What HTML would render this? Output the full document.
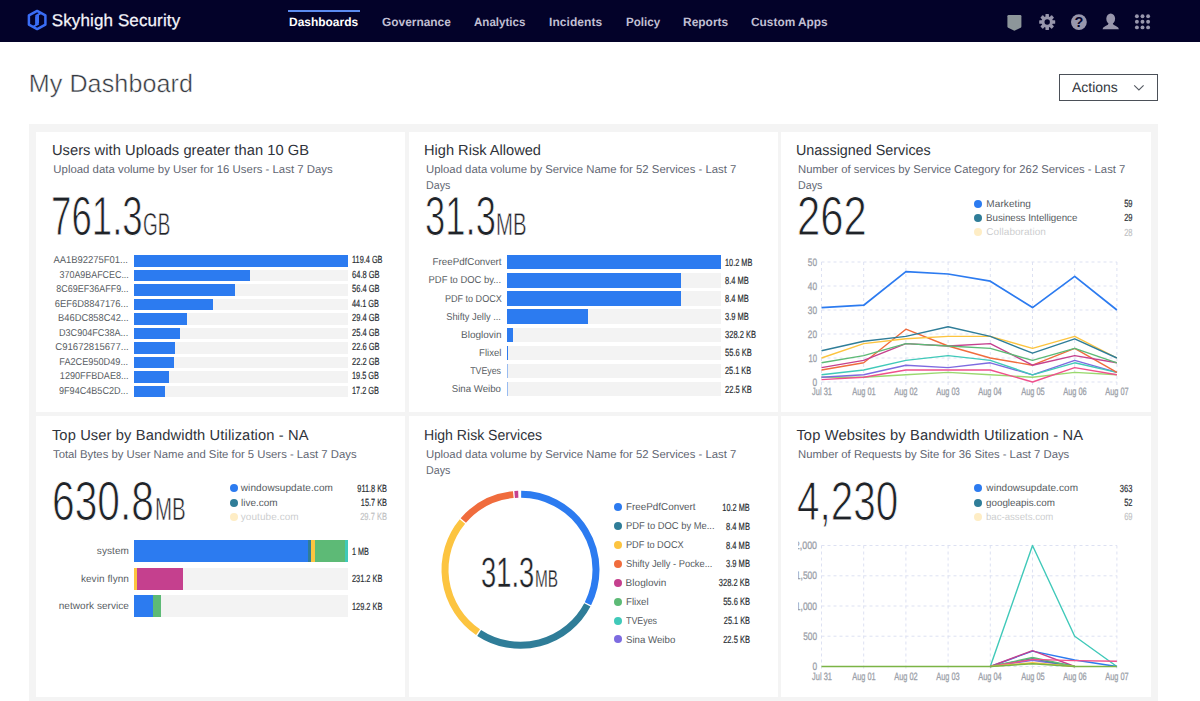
<!DOCTYPE html>
<html lang="en"><head><meta charset="utf-8"><title>My Dashboard</title>
<style>
*{box-sizing:border-box}
html,body{margin:0;padding:0}
body{width:1200px;height:701px;overflow:hidden;background:#fff;font-family:"Liberation Sans", sans-serif;position:relative;color:#3a3f47;text-rendering:geometricPrecision}
.abs,.cd{position:absolute;white-space:nowrap}
.nav{position:absolute;left:0;top:0;width:1200px;height:41.7px;background:#030229}
.panel{position:absolute;left:28.5px;top:124px;width:1129px;height:577px;background:#f4f4f4}
.card{position:absolute;background:#fff;width:369.2px;height:280.8px}
.dot{position:absolute;width:8px;height:8px;border-radius:50%}
.bar{position:absolute}
svg{position:absolute;left:0;top:0;overflow:visible}
svg text{font-family:"Liberation Sans", sans-serif;text-rendering:geometricPrecision}
</style></head><body>
<div class="nav">
<svg width="60" height="42" viewBox="0 0 60 42"><path d="M37.15 10.9 L45.4 15.45 V24.55 L37.15 29.1 L28.9 24.55 V15.45 Z" fill="none" stroke="#3a6df6" stroke-width="2.5" stroke-linejoin="round"/><path d="M35.1 16.5 L39 14.1 V23.3 L35.1 25.5 Z" fill="#3a6df6"/><path d="M35.6 16.2 L41.6 12.7 M38.6 23.6 L32.8 27" stroke="#3a6df6" stroke-width="2" fill="none"/></svg>
<span class="abs" style="left:51.72px;top:12px;font-size:17px;line-height:17px;letter-spacing:0.120px;color:#f4f4fa;-webkit-text-stroke:0.25px #f4f4fa;">Skyhigh Security</span>
<div class="abs" style="left:288.2px;top:9.8px;width:71.6px;height:2px;background:#5b8af0"></div>
<span class="abs" style="left:289.32px;top:16px;font-size:12px;line-height:12px;color:#fff;font-weight:bold;transform:scaleX(0.9966);transform-origin:0 0;">Dashboards</span>
<span class="abs" style="left:381.72px;top:16px;font-size:12px;line-height:12px;color:#c0bfd2;font-weight:bold;transform:scaleX(0.9921);transform-origin:0 0;">Governance</span>
<span class="abs" style="left:474.34px;top:16px;font-size:12px;line-height:12px;color:#c0bfd2;font-weight:bold;transform:scaleX(0.9632);transform-origin:0 0;">Analytics</span>
<span class="abs" style="left:549.02px;top:16px;font-size:12px;line-height:12px;letter-spacing:0.068px;color:#c0bfd2;font-weight:bold;">Incidents</span>
<span class="abs" style="left:625.54px;top:16px;font-size:12px;line-height:12px;color:#c0bfd2;font-weight:bold;transform:scaleX(0.9674);transform-origin:0 0;">Policy</span>
<span class="abs" style="left:682.52px;top:16px;font-size:12px;line-height:12px;color:#c0bfd2;font-weight:bold;transform:scaleX(0.9973);transform-origin:0 0;">Reports</span>
<span class="abs" style="left:750.53px;top:16px;font-size:12px;line-height:12px;color:#c0bfd2;font-weight:bold;transform:scaleX(0.9891);transform-origin:0 0;">Custom Apps</span>
<svg width="1200" height="42" viewBox="0 0 1200 42">
<path d="M1007.4 16.3 q0 -1.2 1.2 -1.2 h11.6 q1.2 0 1.2 1.2 V26.4 q0 .9 -.8 1.3 L1014.4 30.8 L1008.2 27.7 q-.8 -.4 -.8 -1.3 Z" fill="#8d969a"/>
<g fill="#9896ac"><circle cx="1047.2" cy="22" r="5.7"/>
<rect x="1045.45" y="14" width="3.5" height="4" rx="0.6" transform="rotate(0 1047.2 22)"/>
<rect x="1045.45" y="14" width="3.5" height="4" rx="0.6" transform="rotate(45 1047.2 22)"/>
<rect x="1045.45" y="14" width="3.5" height="4" rx="0.6" transform="rotate(90 1047.2 22)"/>
<rect x="1045.45" y="14" width="3.5" height="4" rx="0.6" transform="rotate(135 1047.2 22)"/>
<rect x="1045.45" y="14" width="3.5" height="4" rx="0.6" transform="rotate(180 1047.2 22)"/>
<rect x="1045.45" y="14" width="3.5" height="4" rx="0.6" transform="rotate(225 1047.2 22)"/>
<rect x="1045.45" y="14" width="3.5" height="4" rx="0.6" transform="rotate(270 1047.2 22)"/>
<rect x="1045.45" y="14" width="3.5" height="4" rx="0.6" transform="rotate(315 1047.2 22)"/>
</g><circle cx="1047.2" cy="22" r="2.7" fill="#030229"/>
<circle cx="1078.9" cy="22.1" r="7.9" fill="#9896ac"/><text x="1078.9" y="27.4" text-anchor="middle" font-size="14.5" font-weight="bold" fill="#030229">?</text>
<g fill="#9896ac"><ellipse cx="1110.7" cy="18.7" rx="4.4" ry="5.3"/><path d="M1102.5 29.3 q0 -2 3 -3.2 q3.2 -1.2 3.2 -3.1 h4 q0 1.9 3.2 3.1 q3 1.2 3 3.2 Z"/></g>
<g fill="#9896ac">
<circle cx="1136.9" cy="16.2" r="1.95"/>
<circle cx="1142.5" cy="16.2" r="1.95"/>
<circle cx="1148.1000000000001" cy="16.2" r="1.95"/>
<circle cx="1136.9" cy="21.799999999999997" r="1.95"/>
<circle cx="1142.5" cy="21.799999999999997" r="1.95"/>
<circle cx="1148.1000000000001" cy="21.799999999999997" r="1.95"/>
<circle cx="1136.9" cy="27.4" r="1.95"/>
<circle cx="1142.5" cy="27.4" r="1.95"/>
<circle cx="1148.1000000000001" cy="27.4" r="1.95"/>
</g></svg>
</div>
<span class="abs" style="left:28.70px;top:72px;font-size:25.1px;line-height:25.1px;letter-spacing:0.098px;color:#363a42;-webkit-text-stroke:0.45px #fff;">My Dashboard</span>
<div class="abs" style="left:1059px;top:73.5px;width:98.5px;height:27.5px;border:1.5px solid #4b5058;background:#fff"></div>
<span class="abs" style="left:1071.54px;top:80px;font-size:14px;line-height:14px;color:#33373e;transform:scaleX(0.9962);transform-origin:0 0;">Actions</span>
<svg width="1200" height="120"><path d="M1134.2 85.3 L1138.9 89.9 L1143.6 85.3" fill="none" stroke="#555a62" stroke-width="1.1"/></svg>
<div class="panel"></div>
<div class="card" style="left:35.7px;top:131.7px"></div>
<div class="card" style="left:408.6px;top:131.7px"></div>
<div class="card" style="left:781.4px;top:131.7px"></div>
<div class="card" style="left:35.7px;top:416.4px"></div>
<div class="card" style="left:408.6px;top:416.4px"></div>
<div class="card" style="left:781.4px;top:416.4px"></div>
<span class="abs" style="left:51.91px;top:144px;font-size:14.7px;line-height:14.7px;letter-spacing:0.046px;color:#2f333a;">Users with Uploads greater than 10 GB</span>
<span class="abs" style="left:53.34px;top:165px;font-size:11.4px;line-height:11.4px;letter-spacing:0.003px;color:#5f6672;">Upload data volume by User for 16 Users - Last 7 Days</span>
<span class="cd" style="left:51.13px;top:189.00px;font-size:55.1px;line-height:55.1px;transform:scaleX(0.6654);transform-origin:0 0;color:#1f2328;font-weight:normal;-webkit-text-stroke:1px #fff;">761.3</span>
<span class="cd" style="left:143.46px;top:209.00px;font-size:31.7px;line-height:31.7px;transform:scaleX(0.5969);transform-origin:0 0;color:#1f2328;font-weight:normal;-webkit-text-stroke:0.6px #fff;">GB</span>
<div class="bar" style="left:134px;top:255.0px;width:213.8px;height:11.6px;background:#f3f3f3"></div>
<div class="bar" style="left:134px;top:255.0px;width:213.8px;height:11.6px;background:#2c7bf0"></div>
<span class="abs" style="right:1071.62px;top:256px;font-size:10px;line-height:10px;color:#585d63;transform:scaleX(0.9445);transform-origin:100% 0;">AA1B92275F01...</span>
<span class="cd" style="left:351.80px;top:256.00px;font-size:10.4px;line-height:10.4px;transform:scaleX(0.7071);transform-origin:0 0;color:#2b2f34;-webkit-text-stroke:0.2px #2b2f34;">119.4 GB</span>
<div class="bar" style="left:134px;top:269.5px;width:213.8px;height:11.6px;background:#f3f3f3"></div>
<div class="bar" style="left:134px;top:269.5px;width:116.0px;height:11.6px;background:#2c7bf0"></div>
<span class="abs" style="right:1071.64px;top:271px;font-size:10px;line-height:10px;color:#585d63;transform:scaleX(0.8897);transform-origin:100% 0;">370A9BAFCEC...</span>
<span class="cd" style="left:351.80px;top:271.00px;font-size:10.4px;line-height:10.4px;transform:scaleX(0.7250);transform-origin:0 0;color:#2b2f34;-webkit-text-stroke:0.2px #2b2f34;">64.8 GB</span>
<div class="bar" style="left:134px;top:284.0px;width:213.8px;height:11.6px;background:#f3f3f3"></div>
<div class="bar" style="left:134px;top:284.0px;width:101.0px;height:11.6px;background:#2c7bf0"></div>
<span class="abs" style="right:1071.64px;top:285px;font-size:10px;line-height:10px;color:#585d63;transform:scaleX(0.8963);transform-origin:100% 0;">8C69EF36AFF9...</span>
<span class="cd" style="left:351.80px;top:285.00px;font-size:10.4px;line-height:10.4px;transform:scaleX(0.7250);transform-origin:0 0;color:#2b2f34;-webkit-text-stroke:0.2px #2b2f34;">56.4 GB</span>
<div class="bar" style="left:134px;top:298.5px;width:213.8px;height:11.6px;background:#f3f3f3"></div>
<div class="bar" style="left:134px;top:298.5px;width:79.0px;height:11.6px;background:#2c7bf0"></div>
<span class="abs" style="right:1071.62px;top:300px;font-size:10px;line-height:10px;color:#585d63;transform:scaleX(0.9397);transform-origin:100% 0;">6EF6D8847176...</span>
<span class="cd" style="left:351.80px;top:300.00px;font-size:10.4px;line-height:10.4px;transform:scaleX(0.7076);transform-origin:0 0;color:#2b2f34;-webkit-text-stroke:0.2px #2b2f34;">44.1 GB</span>
<div class="bar" style="left:134px;top:313.0px;width:213.8px;height:11.6px;background:#f3f3f3"></div>
<div class="bar" style="left:134px;top:313.0px;width:52.6px;height:11.6px;background:#2c7bf0"></div>
<span class="abs" style="right:1071.63px;top:314px;font-size:10px;line-height:10px;color:#585d63;transform:scaleX(0.9333);transform-origin:100% 0;">B46DC858C42...</span>
<span class="cd" style="left:351.80px;top:314.00px;font-size:10.4px;line-height:10.4px;transform:scaleX(0.7250);transform-origin:0 0;color:#2b2f34;-webkit-text-stroke:0.2px #2b2f34;">29.4 GB</span>
<div class="bar" style="left:134px;top:327.5px;width:213.8px;height:11.6px;background:#f3f3f3"></div>
<div class="bar" style="left:134px;top:327.5px;width:45.5px;height:11.6px;background:#2c7bf0"></div>
<span class="abs" style="right:1071.64px;top:329px;font-size:10px;line-height:10px;color:#585d63;transform:scaleX(0.9080);transform-origin:100% 0;">D3C904FC38A...</span>
<span class="cd" style="left:351.80px;top:329.00px;font-size:10.4px;line-height:10.4px;transform:scaleX(0.7250);transform-origin:0 0;color:#2b2f34;-webkit-text-stroke:0.2px #2b2f34;">25.4 GB</span>
<div class="bar" style="left:134px;top:342.0px;width:213.8px;height:11.6px;background:#f3f3f3"></div>
<div class="bar" style="left:134px;top:342.0px;width:40.5px;height:11.6px;background:#2c7bf0"></div>
<span class="abs" style="right:1071.62px;top:343px;font-size:10px;line-height:10px;color:#585d63;transform:scaleX(0.9575);transform-origin:100% 0;">C91672815677...</span>
<span class="cd" style="left:351.80px;top:343.00px;font-size:10.4px;line-height:10.4px;transform:scaleX(0.7250);transform-origin:0 0;color:#2b2f34;-webkit-text-stroke:0.2px #2b2f34;">22.6 GB</span>
<div class="bar" style="left:134px;top:356.5px;width:213.8px;height:11.6px;background:#f3f3f3"></div>
<div class="bar" style="left:134px;top:356.5px;width:39.8px;height:11.6px;background:#2c7bf0"></div>
<span class="abs" style="right:1071.63px;top:358px;font-size:10px;line-height:10px;color:#585d63;transform:scaleX(0.9161);transform-origin:100% 0;">FA2CE950D49...</span>
<span class="cd" style="left:351.80px;top:358.00px;font-size:10.4px;line-height:10.4px;transform:scaleX(0.7250);transform-origin:0 0;color:#2b2f34;-webkit-text-stroke:0.2px #2b2f34;">22.2 GB</span>
<div class="bar" style="left:134px;top:371.0px;width:213.8px;height:11.6px;background:#f3f3f3"></div>
<div class="bar" style="left:134px;top:371.0px;width:34.9px;height:11.6px;background:#2c7bf0"></div>
<span class="abs" style="right:1071.64px;top:372px;font-size:10px;line-height:10px;color:#585d63;transform:scaleX(0.9094);transform-origin:100% 0;">1290FFBDAE8...</span>
<span class="cd" style="left:351.80px;top:372.00px;font-size:10.4px;line-height:10.4px;transform:scaleX(0.7076);transform-origin:0 0;color:#2b2f34;-webkit-text-stroke:0.2px #2b2f34;">19.5 GB</span>
<div class="bar" style="left:134px;top:385.5px;width:213.8px;height:11.6px;background:#f3f3f3"></div>
<div class="bar" style="left:134px;top:385.5px;width:30.8px;height:11.6px;background:#2c7bf0"></div>
<span class="abs" style="right:1071.64px;top:387px;font-size:10px;line-height:10px;color:#585d63;transform:scaleX(0.9080);transform-origin:100% 0;">9F94C4B5C2D...</span>
<span class="cd" style="left:351.80px;top:387.00px;font-size:10.4px;line-height:10.4px;transform:scaleX(0.7076);transform-origin:0 0;color:#2b2f34;-webkit-text-stroke:0.2px #2b2f34;">17.2 GB</span>
<span class="abs" style="left:424.41px;top:144px;font-size:14.7px;line-height:14.7px;color:#2f333a;transform:scaleX(0.9951);transform-origin:0 0;">High Risk Allowed</span>
<span class="abs" style="left:426.35px;top:165px;font-size:11.4px;line-height:11.4px;color:#5f6672;transform:scaleX(0.9963);transform-origin:0 0;">Upload data volume by Service Name for 52 Services - Last 7</span>
<span class="abs" style="left:426.37px;top:181px;font-size:11.4px;line-height:11.4px;color:#5f6672;transform:scaleX(0.9372);transform-origin:0 0;">Days</span>
<span class="cd" style="left:424.94px;top:189.00px;font-size:55.1px;line-height:55.1px;transform:scaleX(0.6614);transform-origin:0 0;color:#1f2328;font-weight:normal;-webkit-text-stroke:1px #fff;">31.3</span>
<span class="cd" style="left:496.11px;top:209.00px;font-size:31.7px;line-height:31.7px;transform:scaleX(0.6402);transform-origin:0 0;color:#1f2328;font-weight:normal;-webkit-text-stroke:0.6px #fff;">MB</span>
<div class="bar" style="left:506.7px;top:255.0px;width:214.2px;height:14.4px;background:#f3f3f3"></div>
<div class="bar" style="left:506.7px;top:255.0px;width:214.20px;height:14.4px;background:#2c7bf0;"></div>
<span class="abs" style="right:698.61px;top:258px;font-size:10px;line-height:10px;color:#585d63;transform:scaleX(0.9780);transform-origin:100% 0;">FreePdfConvert</span>
<span class="cd" style="left:724.70px;top:259.00px;font-size:10.4px;line-height:10.4px;transform:scaleX(0.7078);transform-origin:0 0;color:#2b2f34;-webkit-text-stroke:0.2px #2b2f34;">10.2 MB</span>
<div class="bar" style="left:506.7px;top:273.15px;width:214.2px;height:14.4px;background:#f3f3f3"></div>
<div class="bar" style="left:506.7px;top:273.15px;width:174.79px;height:14.4px;background:#2c7bf0;"></div>
<span class="abs" style="right:698.62px;top:276px;font-size:10px;line-height:10px;color:#585d63;transform:scaleX(0.9405);transform-origin:100% 0;">PDF to DOC by...</span>
<span class="cd" style="left:724.70px;top:277.00px;font-size:10.4px;line-height:10.4px;transform:scaleX(0.7250);transform-origin:0 0;color:#2b2f34;-webkit-text-stroke:0.2px #2b2f34;">8.4 MB</span>
<div class="bar" style="left:506.7px;top:291.3px;width:214.2px;height:14.4px;background:#f3f3f3"></div>
<div class="bar" style="left:506.7px;top:291.3px;width:174.79px;height:14.4px;background:#2c7bf0;"></div>
<span class="abs" style="right:698.64px;top:295px;font-size:10px;line-height:10px;color:#585d63;transform:scaleX(0.9061);transform-origin:100% 0;">PDF to DOCX</span>
<span class="cd" style="left:724.70px;top:295.00px;font-size:10.4px;line-height:10.4px;transform:scaleX(0.7250);transform-origin:0 0;color:#2b2f34;-webkit-text-stroke:0.2px #2b2f34;">8.4 MB</span>
<div class="bar" style="left:506.7px;top:309.45px;width:214.2px;height:14.4px;background:#f3f3f3"></div>
<div class="bar" style="left:506.7px;top:309.45px;width:81.61px;height:14.4px;background:#2c7bf0;"></div>
<span class="abs" style="right:698.63px;top:313px;font-size:10px;line-height:10px;color:#585d63;transform:scaleX(0.9279);transform-origin:100% 0;">Shifty Jelly ...</span>
<span class="cd" style="left:724.70px;top:313.00px;font-size:10.4px;line-height:10.4px;transform:scaleX(0.7250);transform-origin:0 0;color:#2b2f34;-webkit-text-stroke:0.2px #2b2f34;">3.9 MB</span>
<div class="bar" style="left:506.7px;top:327.6px;width:214.2px;height:14.4px;background:#f3f3f3"></div>
<div class="bar" style="left:506.7px;top:327.6px;width:6.73px;height:14.4px;background:#2c7bf0;"></div>
<span class="abs" style="right:698.60px;top:331px;font-size:10px;line-height:10px;color:#585d63;transform:scaleX(0.9980);transform-origin:100% 0;">Bloglovin</span>
<span class="cd" style="left:724.70px;top:331.00px;font-size:10.4px;line-height:10.4px;transform:scaleX(0.7250);transform-origin:0 0;color:#2b2f34;-webkit-text-stroke:0.2px #2b2f34;">328.2 KB</span>
<div class="bar" style="left:506.7px;top:345.75px;width:214.2px;height:14.4px;background:#f3f3f3"></div>
<div class="bar" style="left:506.7px;top:345.75px;width:1.18px;height:14.4px;background:#2c7bf0;"></div>
<span class="abs" style="right:698.62px;top:349px;font-size:10px;line-height:10px;color:#585d63;transform:scaleX(0.9545);transform-origin:100% 0;">Flixel</span>
<span class="cd" style="left:724.70px;top:349.00px;font-size:10.4px;line-height:10.4px;transform:scaleX(0.7250);transform-origin:0 0;color:#2b2f34;-webkit-text-stroke:0.2px #2b2f34;">55.6 KB</span>
<div class="bar" style="left:506.7px;top:363.9px;width:214.2px;height:14.4px;background:#f3f3f3"></div>
<div class="bar" style="left:506.7px;top:363.9px;width:1.00px;height:14.4px;background:#2c7bf0;opacity:0.45;"></div>
<span class="abs" style="right:698.65px;top:367px;font-size:10px;line-height:10px;color:#585d63;transform:scaleX(0.8806);transform-origin:100% 0;">TVEyes</span>
<span class="cd" style="left:724.70px;top:367.00px;font-size:10.4px;line-height:10.4px;transform:scaleX(0.7070);transform-origin:0 0;color:#2b2f34;-webkit-text-stroke:0.2px #2b2f34;">25.1 KB</span>
<div class="bar" style="left:506.7px;top:382.04999999999995px;width:214.2px;height:14.4px;background:#f3f3f3"></div>
<div class="bar" style="left:506.7px;top:382.04999999999995px;width:1.00px;height:14.4px;background:#2c7bf0;opacity:0.45;"></div>
<span class="abs" style="right:698.61px;top:385px;font-size:10px;line-height:10px;color:#585d63;transform:scaleX(0.9651);transform-origin:100% 0;">Sina Weibo</span>
<span class="cd" style="left:724.70px;top:386.00px;font-size:10.4px;line-height:10.4px;transform:scaleX(0.7250);transform-origin:0 0;color:#2b2f34;-webkit-text-stroke:0.2px #2b2f34;">22.5 KB</span>
<span class="abs" style="left:796.43px;top:144px;font-size:14.7px;line-height:14.7px;color:#2f333a;transform:scaleX(0.9766);transform-origin:0 0;">Unassigned Services</span>
<span class="abs" style="left:798.35px;top:165px;font-size:11.4px;line-height:11.4px;color:#5f6672;transform:scaleX(0.9905);transform-origin:0 0;">Number of services by Service Category for 262 Services - Last 7</span>
<span class="abs" style="left:798.37px;top:181px;font-size:11.4px;line-height:11.4px;color:#5f6672;transform:scaleX(0.9372);transform-origin:0 0;">Days</span>
<span class="cd" style="left:796.93px;top:189.00px;font-size:55.1px;line-height:55.1px;transform:scaleX(0.7585);transform-origin:0 0;color:#1f2328;font-weight:normal;-webkit-text-stroke:1px #fff;">262</span>
<div class="dot" style="left:974.3px;top:199.7px;background:#2c7bf0;"></div>
<span class="abs" style="left:986.35px;top:200px;font-size:10px;line-height:10px;letter-spacing:0.080px;color:#555a60;">Marketing</span>
<span class="cd" style="right:67.50px;top:200.00px;font-size:10.4px;line-height:10.4px;transform:scaleX(0.7250);transform-origin:100% 0;color:#2b2f34;-webkit-text-stroke:0.2px #2b2f34;">59</span>
<div class="dot" style="left:974.3px;top:213.8px;background:#2f7d98;"></div>
<span class="abs" style="left:986.36px;top:214px;font-size:10px;line-height:10px;color:#555a60;transform:scaleX(0.9722);transform-origin:0 0;">Business Intelligence</span>
<span class="cd" style="right:67.50px;top:214.00px;font-size:10.4px;line-height:10.4px;transform:scaleX(0.7250);transform-origin:100% 0;color:#2b2f34;-webkit-text-stroke:0.2px #2b2f34;">29</span>
<div class="dot" style="left:974.3px;top:228px;background:#fcc440;opacity:0.3;"></div>
<span class="abs" style="left:986.35px;top:228px;font-size:10px;line-height:10px;letter-spacing:0.052px;color:#555a60;opacity:0.3;">Collaboration</span>
<span class="cd" style="right:67.50px;top:229.00px;font-size:10.4px;line-height:10.4px;transform:scaleX(0.7250);transform-origin:100% 0;color:#2b2f34;-webkit-text-stroke:0.2px #2b2f34;opacity:0.3;">28</span>
<svg width="1200" height="701" viewBox="0 0 1200 701">
<path d="M821.5 382.0H1116.9 M821.5 358.0H1116.9 M821.5 334.0H1116.9 M821.5 310.0H1116.9 M821.5 286.0H1116.9 M821.5 262.0H1116.9 M821.5 262.0V385 M863.7 262.0V385 M905.9 262.0V385 M948.1 262.0V385 M990.3 262.0V385 M1032.5 262.0V385 M1074.7 262.0V385 M1116.9 262.0V385" stroke="#dde1f2" stroke-width="1" stroke-dasharray="3 3" fill="none"/>
<path d="M821.5 377.2 L863.7 377.2 L905.9 374.8 L948.1 372.4 L990.3 374.8 L1032.5 377.2 L1074.7 372.4 L1116.9 374.8" stroke="#9ad86e" stroke-width="1.4" fill="none" stroke-linejoin="round"/>
<path d="M821.5 379.6 L863.7 377.2 L905.9 370.0 L948.1 370.0 L990.3 370.0 L1032.5 382.0 L1074.7 367.6 L1116.9 374.8" stroke="#f0508c" stroke-width="1.4" fill="none" stroke-linejoin="round"/>
<path d="M821.5 377.2 L863.7 374.8 L905.9 365.2 L948.1 367.6 L990.3 362.8 L1032.5 374.8 L1074.7 360.4 L1116.9 372.4" stroke="#7d6be0" stroke-width="1.4" fill="none" stroke-linejoin="round"/>
<path d="M821.5 374.8 L863.7 370.0 L905.9 360.4 L948.1 355.6 L990.3 360.4 L1032.5 374.8 L1074.7 362.8 L1116.9 372.4" stroke="#40c9b9" stroke-width="1.4" fill="none" stroke-linejoin="round"/>
<path d="M821.5 370.0 L863.7 362.8 L905.9 329.2 L948.1 346.0 L990.3 358.0 L1032.5 365.2 L1074.7 348.4 L1116.9 372.4" stroke="#f06c3d" stroke-width="1.4" fill="none" stroke-linejoin="round"/>
<path d="M821.5 367.6 L863.7 360.4 L905.9 343.6 L948.1 346.0 L990.3 343.6 L1032.5 365.2 L1074.7 355.6 L1116.9 362.8" stroke="#c5408e" stroke-width="1.4" fill="none" stroke-linejoin="round"/>
<path d="M821.5 362.8 L863.7 355.6 L905.9 343.6 L948.1 346.0 L990.3 348.4 L1032.5 360.4 L1074.7 348.4 L1116.9 362.8" stroke="#5dba76" stroke-width="1.4" fill="none" stroke-linejoin="round"/>
<path d="M821.5 358.0 L863.7 343.6 L905.9 338.8 L948.1 336.4 L990.3 336.4 L1032.5 348.4 L1074.7 336.4 L1116.9 358.0" stroke="#fcc440" stroke-width="1.4" fill="none" stroke-linejoin="round"/>
<path d="M821.5 350.8 L863.7 341.2 L905.9 336.4 L948.1 326.8 L990.3 336.4 L1032.5 353.2 L1074.7 338.8 L1116.9 358.0" stroke="#2f7d98" stroke-width="1.4" fill="none" stroke-linejoin="round"/>
<path d="M821.5 307.6 L863.7 305.2 L905.9 271.6 L948.1 274.0 L990.3 281.2 L1032.5 307.6 L1074.7 276.4 L1116.9 310.0" stroke="#2c7bf0" stroke-width="1.75" fill="none" stroke-linejoin="round"/>
</svg>
<span class="cd" style="right:382.70px;top:378.00px;font-size:10.8px;line-height:10.8px;transform:scaleX(0.7700);transform-origin:100% 0;color:#9da2aa;-webkit-text-stroke:0.3px #9da2aa;">0</span>
<span class="cd" style="right:382.70px;top:354.00px;font-size:10.8px;line-height:10.8px;transform:scaleX(0.7150);transform-origin:100% 0;color:#9da2aa;-webkit-text-stroke:0.3px #9da2aa;">10</span>
<span class="cd" style="right:382.70px;top:330.00px;font-size:10.8px;line-height:10.8px;transform:scaleX(0.7700);transform-origin:100% 0;color:#9da2aa;-webkit-text-stroke:0.3px #9da2aa;">20</span>
<span class="cd" style="right:382.70px;top:306.00px;font-size:10.8px;line-height:10.8px;transform:scaleX(0.7700);transform-origin:100% 0;color:#9da2aa;-webkit-text-stroke:0.3px #9da2aa;">30</span>
<span class="cd" style="right:382.70px;top:282.00px;font-size:10.8px;line-height:10.8px;transform:scaleX(0.7700);transform-origin:100% 0;color:#9da2aa;-webkit-text-stroke:0.3px #9da2aa;">40</span>
<span class="cd" style="right:382.70px;top:258.00px;font-size:10.8px;line-height:10.8px;transform:scaleX(0.7700);transform-origin:100% 0;color:#9da2aa;-webkit-text-stroke:0.3px #9da2aa;">50</span>
<span class="cd" style="left:791.5px;width:60px;text-align:center;top:387.2px;font-size:10.6px;line-height:11px;transform:scaleX(0.70);color:#9da2aa;-webkit-text-stroke:0.3px #9da2aa">Jul 31</span>
<span class="cd" style="left:833.7px;width:60px;text-align:center;top:387.2px;font-size:10.6px;line-height:11px;transform:scaleX(0.70);color:#9da2aa;-webkit-text-stroke:0.3px #9da2aa">Aug 01</span>
<span class="cd" style="left:875.9px;width:60px;text-align:center;top:387.2px;font-size:10.6px;line-height:11px;transform:scaleX(0.70);color:#9da2aa;-webkit-text-stroke:0.3px #9da2aa">Aug 02</span>
<span class="cd" style="left:918.1px;width:60px;text-align:center;top:387.2px;font-size:10.6px;line-height:11px;transform:scaleX(0.70);color:#9da2aa;-webkit-text-stroke:0.3px #9da2aa">Aug 03</span>
<span class="cd" style="left:960.3px;width:60px;text-align:center;top:387.2px;font-size:10.6px;line-height:11px;transform:scaleX(0.70);color:#9da2aa;-webkit-text-stroke:0.3px #9da2aa">Aug 04</span>
<span class="cd" style="left:1002.5px;width:60px;text-align:center;top:387.2px;font-size:10.6px;line-height:11px;transform:scaleX(0.70);color:#9da2aa;-webkit-text-stroke:0.3px #9da2aa">Aug 05</span>
<span class="cd" style="left:1044.7px;width:60px;text-align:center;top:387.2px;font-size:10.6px;line-height:11px;transform:scaleX(0.70);color:#9da2aa;-webkit-text-stroke:0.3px #9da2aa">Aug 06</span>
<span class="cd" style="left:1086.9px;width:60px;text-align:center;top:387.2px;font-size:10.6px;line-height:11px;transform:scaleX(0.70);color:#9da2aa;-webkit-text-stroke:0.3px #9da2aa">Aug 07</span>
<span class="abs" style="left:51.91px;top:429px;font-size:14.7px;line-height:14.7px;letter-spacing:0.117px;color:#2f333a;">Top User by Bandwidth Utilization - NA</span>
<span class="abs" style="left:53.35px;top:450px;font-size:11.4px;line-height:11.4px;color:#5f6672;transform:scaleX(0.9927);transform-origin:0 0;">Total Bytes by User Name and Site for 5 Users - Last 7 Days</span>
<span class="cd" style="left:52.32px;top:474.00px;font-size:55.1px;line-height:55.1px;transform:scaleX(0.7391);transform-origin:0 0;color:#1f2328;font-weight:normal;-webkit-text-stroke:1px #fff;">630.8</span>
<span class="cd" style="left:155.10px;top:493.00px;font-size:32.1px;line-height:32.1px;transform:scaleX(0.6388);transform-origin:0 0;color:#1f2328;font-weight:normal;-webkit-text-stroke:0.6px #fff;">MB</span>
<div class="dot" style="left:229.5px;top:484.25px;background:#2c7bf0;"></div>
<span class="abs" style="left:240.80px;top:484px;font-size:10px;line-height:10px;letter-spacing:0.093px;color:#555a60;">windowsupdate.com</span>
<span class="cd" style="right:812.70px;top:485.00px;font-size:10.4px;line-height:10.4px;transform:scaleX(0.7067);transform-origin:100% 0;color:#2b2f34;-webkit-text-stroke:0.2px #2b2f34;">911.8 KB</span>
<div class="dot" style="left:229.5px;top:498.5px;background:#2f7d98;"></div>
<span class="abs" style="left:240.80px;top:499px;font-size:10px;line-height:10px;color:#555a60;transform:scaleX(0.9979);transform-origin:0 0;">live.com</span>
<span class="cd" style="right:812.70px;top:499.00px;font-size:10.4px;line-height:10.4px;transform:scaleX(0.7070);transform-origin:100% 0;color:#2b2f34;-webkit-text-stroke:0.2px #2b2f34;">15.7 KB</span>
<div class="dot" style="left:229.5px;top:512.75px;background:#fcc440;opacity:0.3;"></div>
<span class="abs" style="left:240.80px;top:513px;font-size:10px;line-height:10px;letter-spacing:0.064px;color:#555a60;opacity:0.3;">youtube.com</span>
<span class="cd" style="right:812.70px;top:513.00px;font-size:10.4px;line-height:10.4px;transform:scaleX(0.7250);transform-origin:100% 0;color:#2b2f34;-webkit-text-stroke:0.2px #2b2f34;opacity:0.3;">29.7 KB</span>
<div class="bar" style="left:134px;top:540.0px;width:214.2px;height:22.3px;background:linear-gradient(90deg,#2c7bf0 0.0px,#2c7bf0 174.1px,#2f7d98 174.1px,#2f7d98 177.1px,#fcc440 177.1px,#fcc440 181.1px,#5dba76 181.1px,#5dba76 211.5px,#40c9b9 211.5px,#40c9b9 214.2px,#f3f3f3 214.2px)"></div>
<span class="abs" style="right:1071.01px;top:547px;font-size:10px;line-height:10px;letter-spacing:0.086px;color:#585d63;">system</span>
<span class="cd" style="left:351.80px;top:548.00px;font-size:10.4px;line-height:10.4px;transform:scaleX(0.6976);transform-origin:0 0;color:#2b2f34;-webkit-text-stroke:0.2px #2b2f34;">1 MB</span>
<div class="bar" style="left:134px;top:567.6px;width:214.2px;height:22.3px;background:linear-gradient(90deg,#fcc440 0.0px,#fcc440 2.7px,#c5408e 2.7px,#c5408e 49.2px,#f3f3f3 49.2px)"></div>
<span class="abs" style="right:1071.02px;top:575px;font-size:10px;line-height:10px;letter-spacing:0.075px;color:#585d63;">kevin flynn</span>
<span class="cd" style="left:351.80px;top:575.00px;font-size:10.4px;line-height:10.4px;transform:scaleX(0.7095);transform-origin:0 0;color:#2b2f34;-webkit-text-stroke:0.2px #2b2f34;">231.2 KB</span>
<div class="bar" style="left:134px;top:595.2px;width:214.2px;height:22.3px;background:linear-gradient(90deg,#2c7bf0 0.0px,#2c7bf0 18.8px,#5dba76 18.8px,#5dba76 27.2px,#f3f3f3 27.2px)"></div>
<span class="abs" style="right:1071.05px;top:602px;font-size:10px;line-height:10px;letter-spacing:0.052px;color:#585d63;">network service</span>
<span class="cd" style="left:351.80px;top:603.00px;font-size:10.4px;line-height:10.4px;transform:scaleX(0.7095);transform-origin:0 0;color:#2b2f34;-webkit-text-stroke:0.2px #2b2f34;">129.2 KB</span>
<span class="abs" style="left:424.44px;top:429px;font-size:14.7px;line-height:14.7px;color:#2f333a;transform:scaleX(0.9578);transform-origin:0 0;">High Risk Services</span>
<span class="abs" style="left:426.35px;top:450px;font-size:11.4px;line-height:11.4px;color:#5f6672;transform:scaleX(0.9963);transform-origin:0 0;">Upload data volume by Service Name for 52 Services - Last 7</span>
<span class="abs" style="left:426.37px;top:466px;font-size:11.4px;line-height:11.4px;color:#5f6672;transform:scaleX(0.9372);transform-origin:0 0;">Days</span>
<svg width="1200" height="701" viewBox="0 0 1200 701">
<path d="M521.16 494.30A75.5 75.5 0 0 1 587.95 603.72" stroke="#2c7bf0" stroke-width="7" fill="none"/>
<path d="M587.35 604.89A75.5 75.5 0 0 1 479.14 632.96" stroke="#2f7d98" stroke-width="7" fill="none"/>
<path d="M478.05 632.23A75.5 75.5 0 0 1 462.44 521.54" stroke="#fcc440" stroke-width="7" fill="none"/>
<path d="M463.29 520.53A75.5 75.5 0 0 1 513.32 494.64" stroke="#f06c3d" stroke-width="7" fill="none"/>
<path d="M514.63 494.53A75.5 75.5 0 0 1 518.28 494.33" stroke="#c5408e" stroke-width="7" fill="none"/>
</svg>
<span class="cd" style="left:480.86px;top:552.00px;font-size:42.4px;line-height:42.4px;transform:scaleX(0.6447);transform-origin:0 0;color:#1f2328;font-weight:normal;-webkit-text-stroke:0.5px #fff;">31.3</span>
<span class="cd" style="left:534.69px;top:568.00px;font-size:24.3px;line-height:24.3px;transform:scaleX(0.6327);transform-origin:0 0;color:#1f2328;font-weight:normal;-webkit-text-stroke:0.3px #fff;">MB</span>
<div class="dot" style="left:614.1px;top:503.1px;background:#2c7bf0;"></div>
<span class="abs" style="left:625.61px;top:503px;font-size:10px;line-height:10px;color:#555a60;transform:scaleX(0.9859);transform-origin:0 0;">FreePdfConvert</span>
<span class="cd" style="right:450.10px;top:504.00px;font-size:10.4px;line-height:10.4px;transform:scaleX(0.7078);transform-origin:100% 0;color:#2b2f34;-webkit-text-stroke:0.2px #2b2f34;">10.2 MB</span>
<div class="dot" style="left:614.1px;top:522.0px;background:#2f7d98;"></div>
<span class="abs" style="left:625.62px;top:522px;font-size:10px;line-height:10px;color:#555a60;transform:scaleX(0.9375);transform-origin:0 0;">PDF to DOC by Me...</span>
<span class="cd" style="right:450.10px;top:523.00px;font-size:10.4px;line-height:10.4px;transform:scaleX(0.7250);transform-origin:100% 0;color:#2b2f34;-webkit-text-stroke:0.2px #2b2f34;">8.4 MB</span>
<div class="dot" style="left:614.1px;top:540.9px;background:#fcc440;"></div>
<span class="abs" style="left:625.63px;top:541px;font-size:10px;line-height:10px;color:#555a60;transform:scaleX(0.9182);transform-origin:0 0;">PDF to DOCX</span>
<span class="cd" style="right:450.10px;top:542.00px;font-size:10.4px;line-height:10.4px;transform:scaleX(0.7250);transform-origin:100% 0;color:#2b2f34;-webkit-text-stroke:0.2px #2b2f34;">8.4 MB</span>
<div class="dot" style="left:614.1px;top:559.8000000000001px;background:#f06c3d;"></div>
<span class="abs" style="left:625.63px;top:560px;font-size:10px;line-height:10px;color:#555a60;transform:scaleX(0.9316);transform-origin:0 0;">Shifty Jelly - Pocke...</span>
<span class="cd" style="right:450.10px;top:560.00px;font-size:10.4px;line-height:10.4px;transform:scaleX(0.7250);transform-origin:100% 0;color:#2b2f34;-webkit-text-stroke:0.2px #2b2f34;">3.9 MB</span>
<div class="dot" style="left:614.1px;top:578.7px;background:#c5408e;"></div>
<span class="abs" style="left:625.60px;top:579px;font-size:10px;line-height:10px;letter-spacing:0.027px;color:#555a60;">Bloglovin</span>
<span class="cd" style="right:450.10px;top:579.00px;font-size:10.4px;line-height:10.4px;transform:scaleX(0.7250);transform-origin:100% 0;color:#2b2f34;-webkit-text-stroke:0.2px #2b2f34;">328.2 KB</span>
<div class="dot" style="left:614.1px;top:597.6px;background:#5dba76;"></div>
<span class="abs" style="left:625.61px;top:598px;font-size:10px;line-height:10px;color:#555a60;transform:scaleX(0.9677);transform-origin:0 0;">Flixel</span>
<span class="cd" style="right:450.10px;top:598.00px;font-size:10.4px;line-height:10.4px;transform:scaleX(0.7250);transform-origin:100% 0;color:#2b2f34;-webkit-text-stroke:0.2px #2b2f34;">55.6 KB</span>
<div class="dot" style="left:614.1px;top:616.5px;background:#40c9b9;"></div>
<span class="abs" style="left:625.65px;top:617px;font-size:10px;line-height:10px;color:#555a60;transform:scaleX(0.8864);transform-origin:0 0;">TVEyes</span>
<span class="cd" style="right:450.10px;top:617.00px;font-size:10.4px;line-height:10.4px;transform:scaleX(0.7070);transform-origin:100% 0;color:#2b2f34;-webkit-text-stroke:0.2px #2b2f34;">25.1 KB</span>
<div class="dot" style="left:614.1px;top:635.4px;background:#7d6be0;"></div>
<span class="abs" style="left:625.61px;top:636px;font-size:10px;line-height:10px;color:#555a60;transform:scaleX(0.9671);transform-origin:0 0;">Sina Weibo</span>
<span class="cd" style="right:450.10px;top:636.00px;font-size:10.4px;line-height:10.4px;transform:scaleX(0.7250);transform-origin:100% 0;color:#2b2f34;-webkit-text-stroke:0.2px #2b2f34;">22.5 KB</span>
<span class="abs" style="left:796.41px;top:429px;font-size:14.7px;line-height:14.7px;letter-spacing:0.126px;color:#2f333a;">Top Websites by Bandwidth Utilization - NA</span>
<span class="abs" style="left:798.35px;top:450px;font-size:11.4px;line-height:11.4px;color:#5f6672;transform:scaleX(0.9918);transform-origin:0 0;">Number of Requests by Site for 36 Sites - Last 7 Days</span>
<span class="cd" style="left:797.08px;top:474.00px;font-size:54.9px;line-height:54.9px;transform:scaleX(0.7369);transform-origin:0 0;color:#1f2328;font-weight:normal;-webkit-text-stroke:1px #fff;">4,230</span>
<div class="dot" style="left:974.3px;top:484.25px;background:#2c7bf0;"></div>
<span class="abs" style="left:986.35px;top:484px;font-size:10px;line-height:10px;letter-spacing:0.065px;color:#555a60;">windowsupdate.com</span>
<span class="cd" style="right:67.50px;top:485.00px;font-size:10.4px;line-height:10.4px;transform:scaleX(0.7250);transform-origin:100% 0;color:#2b2f34;-webkit-text-stroke:0.2px #2b2f34;">363</span>
<div class="dot" style="left:974.3px;top:498.5px;background:#2f7d98;"></div>
<span class="abs" style="left:986.36px;top:499px;font-size:10px;line-height:10px;color:#555a60;transform:scaleX(0.9828);transform-origin:0 0;">googleapis.com</span>
<span class="cd" style="right:67.50px;top:499.00px;font-size:10.4px;line-height:10.4px;transform:scaleX(0.7250);transform-origin:100% 0;color:#2b2f34;-webkit-text-stroke:0.2px #2b2f34;">52</span>
<div class="dot" style="left:974.3px;top:512.75px;background:#fcc440;opacity:0.3;"></div>
<span class="abs" style="left:986.37px;top:513px;font-size:10px;line-height:10px;color:#555a60;transform:scaleX(0.9615);transform-origin:0 0;opacity:0.3;">bac-assets.com</span>
<span class="cd" style="right:67.50px;top:513.00px;font-size:10.4px;line-height:10.4px;transform:scaleX(0.7250);transform-origin:100% 0;color:#2b2f34;-webkit-text-stroke:0.2px #2b2f34;opacity:0.3;">69</span>
<div class="abs" style="left:797.9px;top:530px;width:360px;height:170px;overflow:hidden"><div style="position:absolute;left:-797.9px;top:-530px;width:1200px;height:701px">
<svg width="1200" height="701" viewBox="0 0 1200 701">
<path d="M821.5 666.5H1116.9 M821.5 636.2H1116.9 M821.5 606.0H1116.9 M821.5 575.8H1116.9 M821.5 545.5H1116.9 M821.5 545.5V669.5 M863.7 545.5V669.5 M905.9 545.5V669.5 M948.1 545.5V669.5 M990.3 545.5V669.5 M1032.5 545.5V669.5 M1074.7 545.5V669.5 M1116.9 545.5V669.5" stroke="#dde1f2" stroke-width="1" stroke-dasharray="3 3" fill="none"/>
<path d="M990.3 666.5 L1032.5 545.5 L1074.7 636.2 L1116.9 666.5" stroke="#40c9b9" stroke-width="1.4" fill="none" stroke-linejoin="round"/>
<path d="M990.3 666.5 L1032.5 651.1 L1074.7 660.0 L1116.9 666.5" stroke="#2c7bf0" stroke-width="1.4" fill="none" stroke-linejoin="round"/>
<path d="M990.3 666.5 L1032.5 650.6 L1074.7 666.5" stroke="#c5408e" stroke-width="1.4" fill="none" stroke-linejoin="round"/>
<path d="M990.3 666.5 L1032.5 660.3 L1074.7 666.5" stroke="#7d6be0" stroke-width="1.4" fill="none" stroke-linejoin="round"/>
<path d="M990.3 666.5 L1032.5 658.6 L1074.7 666.5" stroke="#2f7d98" stroke-width="1.4" fill="none" stroke-linejoin="round"/>
<path d="M990.3 666.5 L1032.5 657.5 L1074.7 666.5" stroke="#5dba76" stroke-width="1.4" fill="none" stroke-linejoin="round"/>
<path d="M990.3 666.5 L1032.5 659.4 L1074.7 660.6 L1116.9 661.2" stroke="#f0508c" stroke-width="1.4" fill="none" stroke-linejoin="round"/>
<path d="M990.3 666.5 L1032.5 662.7 L1074.7 666.5" stroke="#fcc440" stroke-width="1.4" fill="none" stroke-linejoin="round"/>
<path d="M821.5 666.5 L863.7 666.5 L905.9 666.5 L948.1 666.5 L990.3 666.5 L1032.5 663.8 L1074.7 666.5 L1116.9 666.5" stroke="#7bb446" stroke-width="1.5" fill="none" stroke-linejoin="round"/>
</svg>
<span class="cd" style="right:382.70px;top:662.00px;font-size:10.8px;line-height:10.8px;transform:scaleX(0.7700);transform-origin:100% 0;color:#9da2aa;-webkit-text-stroke:0.3px #9da2aa;">0</span>
<span class="cd" style="right:382.70px;top:632.00px;font-size:10.8px;line-height:10.8px;transform:scaleX(0.7700);transform-origin:100% 0;color:#9da2aa;-webkit-text-stroke:0.3px #9da2aa;">500</span>
<span class="cd" style="right:382.70px;top:602.00px;font-size:10.8px;line-height:10.8px;transform:scaleX(0.7844);transform-origin:100% 0;color:#9da2aa;-webkit-text-stroke:0.3px #9da2aa;">1,000</span>
<span class="cd" style="right:382.70px;top:571.00px;font-size:10.8px;line-height:10.8px;transform:scaleX(0.7844);transform-origin:100% 0;color:#9da2aa;-webkit-text-stroke:0.3px #9da2aa;">1,500</span>
<span class="cd" style="right:382.70px;top:541.00px;font-size:10.8px;line-height:10.8px;transform:scaleX(0.8200);transform-origin:100% 0;color:#9da2aa;-webkit-text-stroke:0.3px #9da2aa;">2,000</span>
<span class="cd" style="left:791.5px;width:60px;text-align:center;top:671.7px;font-size:10.6px;line-height:11px;transform:scaleX(0.70);color:#9da2aa;-webkit-text-stroke:0.3px #9da2aa">Jul 31</span>
<span class="cd" style="left:833.7px;width:60px;text-align:center;top:671.7px;font-size:10.6px;line-height:11px;transform:scaleX(0.70);color:#9da2aa;-webkit-text-stroke:0.3px #9da2aa">Aug 01</span>
<span class="cd" style="left:875.9px;width:60px;text-align:center;top:671.7px;font-size:10.6px;line-height:11px;transform:scaleX(0.70);color:#9da2aa;-webkit-text-stroke:0.3px #9da2aa">Aug 02</span>
<span class="cd" style="left:918.1px;width:60px;text-align:center;top:671.7px;font-size:10.6px;line-height:11px;transform:scaleX(0.70);color:#9da2aa;-webkit-text-stroke:0.3px #9da2aa">Aug 03</span>
<span class="cd" style="left:960.3px;width:60px;text-align:center;top:671.7px;font-size:10.6px;line-height:11px;transform:scaleX(0.70);color:#9da2aa;-webkit-text-stroke:0.3px #9da2aa">Aug 04</span>
<span class="cd" style="left:1002.5px;width:60px;text-align:center;top:671.7px;font-size:10.6px;line-height:11px;transform:scaleX(0.70);color:#9da2aa;-webkit-text-stroke:0.3px #9da2aa">Aug 05</span>
<span class="cd" style="left:1044.7px;width:60px;text-align:center;top:671.7px;font-size:10.6px;line-height:11px;transform:scaleX(0.70);color:#9da2aa;-webkit-text-stroke:0.3px #9da2aa">Aug 06</span>
<span class="cd" style="left:1086.9px;width:60px;text-align:center;top:671.7px;font-size:10.6px;line-height:11px;transform:scaleX(0.70);color:#9da2aa;-webkit-text-stroke:0.3px #9da2aa">Aug 07</span>
</div></div>
</body></html>
